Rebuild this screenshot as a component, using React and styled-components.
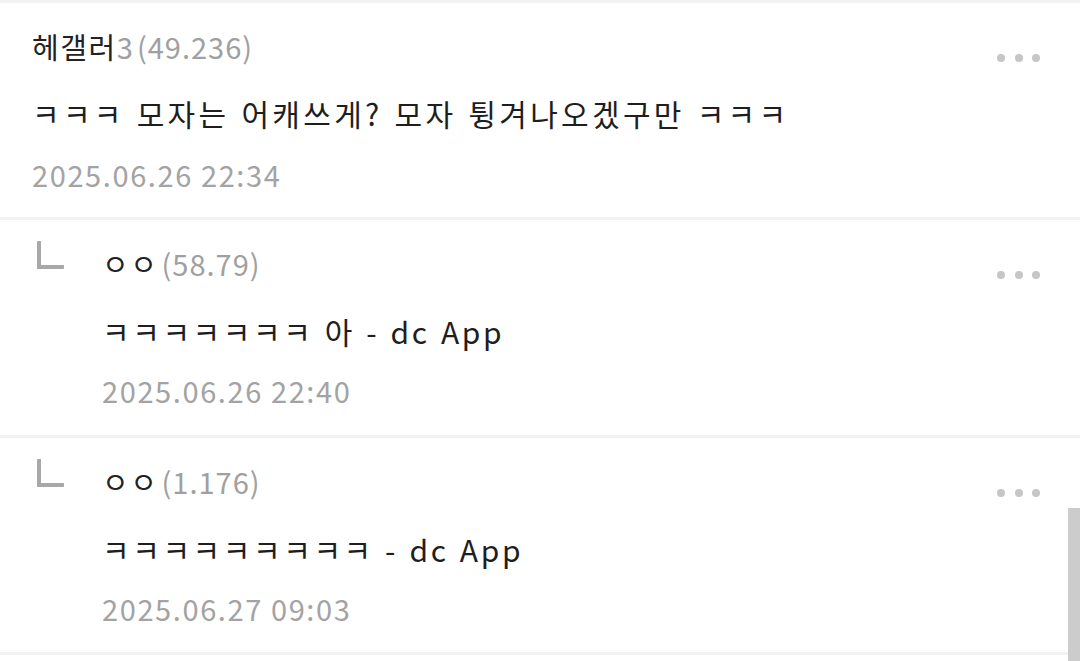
import React from 'react'
import styled, { createGlobalStyle } from 'styled-components'

const GlobalStyle = createGlobalStyle`
  html, body {
    margin: 0;
    padding: 0;
    background: #ffffff;
  }
  body {
    font-family: "Noto Sans CJK KR", "Noto Sans", sans-serif;
    -webkit-font-smoothing: antialiased;
  }
`

const Lista = styled.div`
  width: 1080px;
  height: 661px;
  overflow: hidden;
  border-top: 3px solid #f2f2f2;
  box-sizing: border-box;
`

const Comentario = styled.div`
  display: flex;
  align-items: flex-start;
  padding: 23px 40px 21px 32px;
  border-bottom: 3px solid #f2f2f2;
  height: ${props => props.altura}px;
  box-sizing: border-box;
`

const Recuo = styled.div`
  width: 70px;
  flex-shrink: 0;
`

const MarcaResposta = styled.span`
  display: block;
  width: 23px;
  height: 24px;
  margin: -2px 0 0 5px;
  border-left: 4px solid #a8a8a8;
  border-bottom: 4px solid #a8a8a8;
  border-radius: 1px;
`

const Corpo = styled.div`
  flex: 1;
  display: flex;
  flex-direction: column;
`

const LinhaNome = styled.div`
  font-size: 29px;
  line-height: 40px;
  color: #222;
  letter-spacing: 1.6px;
`

const Cinza = styled.span`
  color: #a0a0a0;
  margin-left: ${props => props.espaco || 0}px;
  letter-spacing: 1px;
`

const Texto = styled.div`
  margin-top: ${props => props.topo}px;
  font-size: 30px;
  line-height: 44px;
  color: #1e1e1e;
  letter-spacing: ${props => props.espacamento}px;
  word-spacing: 2px;
`

const Data = styled.div`
  margin-top: ${props => props.topo}px;
  font-size: 29px;
  line-height: 40px;
  color: #a3a3a3;
  letter-spacing: 1.6px;
`

const Mais = styled.div`
  display: flex;
  gap: 9.5px;
  margin-top: 28px;
`

const Ponto = styled.span`
  width: 8px;
  height: 8px;
  border-radius: 50%;
  background: #c6c6c6;
`

const BarraRolagem = styled.div`
  position: fixed;
  right: 0;
  top: 508px;
  width: 12px;
  height: 153px;
  background: #cccccc;
`

const comentarios = [
  { id: 1, nome: '헤갤러', extra: '3', ip: '(49.236)', texto: 'ㅋㅋㅋ 모자는 어캐쓰게? 모자 튕겨나오겠구만 ㅋㅋㅋ', data: '2025.06.26 22:34', resposta: false, altura: 217, topoTexto: 25, topoData: 19, espacamento: 3.3 },
  { id: 2, nome: 'ㅇㅇ', extra: '', ip: '(58.79)', texto: 'ㅋㅋㅋㅋㅋㅋㅋ 아 - dc App', data: '2025.06.26 22:40', resposta: true, altura: 218, topoTexto: 26, topoData: 17, espacamento: 2.6 },
  { id: 3, nome: 'ㅇㅇ', extra: '', ip: '(1.176)', texto: 'ㅋㅋㅋㅋㅋㅋㅋㅋㅋ - dc App', data: '2025.06.27 09:03', resposta: true, altura: 217, topoTexto: 26, topoData: 17, espacamento: 2.6 },
]

function App() {
  return (
    <>
      <GlobalStyle />
      <Lista>
        {comentarios.map((c) => (
          <Comentario key={c.id} altura={c.altura}>
            {c.resposta && (
              <Recuo>
                <MarcaResposta />
              </Recuo>
            )}
            <Corpo>
              <LinhaNome>
                {c.nome}
                {c.extra && <Cinza>{c.extra}</Cinza>}
                <Cinza espaco={3}>{c.ip}</Cinza>
              </LinhaNome>
              <Texto topo={c.topoTexto} espacamento={c.espacamento}>{c.texto}</Texto>
              <Data topo={c.topoData}>{c.data}</Data>
            </Corpo>
            <Mais>
              <Ponto />
              <Ponto />
              <Ponto />
            </Mais>
          </Comentario>
        ))}
      </Lista>
      <BarraRolagem />
    </>
  )
}

export default App
